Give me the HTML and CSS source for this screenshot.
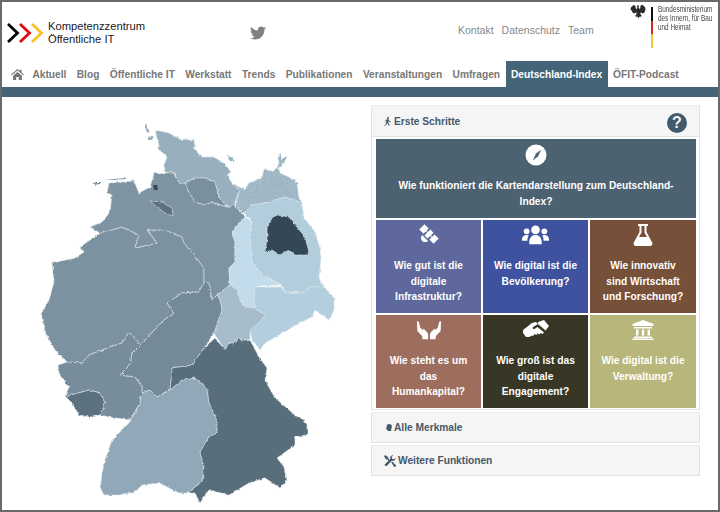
FILE: index.html
```html
<!DOCTYPE html>
<html lang="de">
<head>
<meta charset="utf-8">
<title>Deutschland-Index</title>
<link rel="stylesheet" href="styles.css">
</head>
<body>
<div class="frame">
  <header class="top">
    <div class="brand">
      <svg class="chevrons" viewBox="0 0 36 20" width="36" height="20">
        <polyline points="1,1 10.5,10 1,19" class="chev c-black"/>
        <polyline points="13,1 22.5,10 13,19" class="chev c-red"/>
        <polyline points="25,1 34.5,10 25,19" class="chev c-yellow"/>
      </svg>
      <div class="brand-text">Kompetenzzentrum<br>Öffentliche IT</div>
    </div>
    <svg class="twitter" viewBox="0 0 512 512" width="16" height="16"><path d="M459.37 151.716c.325 4.548.325 9.097.325 13.645 0 138.72-105.583 298.558-298.558 298.558-59.452 0-114.68-17.219-161.137-47.106 8.447.974 16.568 1.299 25.34 1.299 49.055 0 94.213-16.568 130.274-44.832-46.132-.975-84.792-31.188-98.112-72.772 6.498.974 12.995 1.624 19.818 1.624 9.421 0 18.843-1.3 27.614-3.573-48.081-9.747-84.143-51.98-84.143-102.985v-1.299c13.969 7.797 30.214 12.67 47.431 13.319-28.264-18.843-46.781-51.005-46.781-87.391 0-19.492 5.197-37.36 14.294-52.954 51.655 63.675 129.3 105.258 216.365 109.807-1.624-7.797-2.599-15.918-2.599-24.04 0-57.828 46.782-104.934 104.934-104.934 30.213 0 57.502 12.67 76.67 33.137 23.715-4.548 46.456-13.32 66.599-25.34-7.798 24.366-24.366 44.833-46.132 57.827 21.117-2.273 41.584-8.122 60.426-16.243-14.292 20.791-32.161 39.308-52.628 54.253z"/></svg>
    <nav class="meta">
      <a>Kontakt</a><a>Datenschutz</a><a>Team</a>
    </nav>
    <div class="ministry">
      <svg class="eagle" viewBox="0 0 16 17" width="16" height="17">
        <path d="M8 1l1 .8-.4 1.500.7 1.700.9-.8.4-2.700 1.800-.8 1.300 1.300 1.200.9.6 2-.4 2.200-.9 1.700-1.300.8-1.500-.8-.7-.5-.3 1.700 1.800 2.400-1.500-.5-.3 1.700-1.100-1-.8 1.800-.8-1.800-1.100 1-.3-1.700-1.500.5 1.800-2.400-.3-1.700-.7.500-1.500.8-1.300-.8-.9-1.700L.5 5.200l.6-2 1.200-.9L3.600 1l1.800.8.4 2.700.9.8.7-1.700L7 2z"/>
      </svg>
      <div class="flag"><span class="fl-b"></span><span class="fl-r"></span><span class="fl-y"></span></div>
      <div class="ministry-text">Bundesministerium<br>des Innern, für Bau<br>und Heimat</div>
    </div>
  </header>

  <nav class="mainnav">
    <a class="home"><svg viewBox="0 0 14 12" width="13" height="11"><path d="M7 0l2.600 2.200V.8h1.800v2.900L14 6l-.8.9L7 1.700.8 6.900 0 6zM2.200 7.300L7 3.200l4.800 4.100V12H8.400V8.600H5.600V12H2.200z"/></svg></a>
    <a>Aktuell</a><a>Blog</a><a>Öffentliche IT</a><a>Werkstatt</a><a>Trends</a><a>Publikationen</a><a>Veranstaltungen</a><a>Umfragen</a><a class="active">Deutschland-Index</a><a>ÖFIT-Podcast</a>
  </nav>
  <div class="bar"></div>

  <main class="content">
    <svg class="map" viewBox="0 97 369 411" width="369" height="411">
      <defs>
        <filter id="rough" x="-5%" y="-5%" width="110%" height="110%" color-interpolation-filters="sRGB">
          <feTurbulence type="fractalNoise" baseFrequency="0.28" numOctaves="2" seed="4"/>
          <feDisplacementMap in="SourceGraphic" scale="3" xChannelSelector="R" yChannelSelector="G"/>
        </filter>
        <pattern id="dots" width="2" height="2" patternUnits="userSpaceOnUse">
          <rect width="2" height="2" fill="#a3bac8"/><rect width="1" height="1" fill="#9ab1c0"/>
        </pattern>
      </defs>
      <g class="states" filter="url(#rough)">
        <polygon class="s-nw" points="50,263 73,258 82,252 78,247 98,233 120,227 137,235 133,248 155,243 145,230 163,230 180,237 182,243 190,252 202,268 202,282 197,292 180,293 165,303 172,313 162,320 138,345 127,332 120,343 108,347 87,355 80,363 65,362 53,350 43,332 40,313 47,300 52,282"/>
        <polygon class="s-ni" points="105,193 107,183 132,181 137,193 148,187 152,173 173,173 177,183 183,183 187,192 193,202 203,205 210,202 225,207 232,205 242,215 243,217 230,232 233,242 233,262 227,268 228,285 215,295 210,300 207,283 202,282 202,268 190,252 182,243 180,237 163,230 145,230 155,243 133,248 137,235 120,227 98,233 88,227 100,222 108,212 110,195"/>
        <polygon class="s-sh" points="153,130 167,133 177,139 192,140 193,150 200,157 212,157 223,164 229,172 225,175 230,183 237,190 232,205 225,207 217,197 213,182 203,178 193,178 183,183 177,183 173,173 163,172 162,165 165,157 158,150 155,138"/>
        <polygon class="s-hh" points="183,183 193,178 203,178 213,182 217,197 225,207 210,202 203,205 193,202 187,192"/>
        <polygon class="s-mv" points="230,183 243,190 247,183 260,178 262,168 270,172 277,167 278,173 287,177 295,183 297,198 300,203 283,197 263,203 250,205 242,213 233,207 237,190"/>
        <polygon class="s-bb" points="242,213 250,205 263,203 283,197 300,203 302,218 313,232 318,248 319,258 317,278 322,287 308,287 300,293 283,292 280,285 260,275 250,262 248,235 250,222"/>
        <polygon class="s-st" points="243,217 250,222 248,235 250,262 260,275 280,285 255,286 252,300 253,310 243,307 239,302 235,290 228,285 227,268 233,262 233,242 230,232"/>
        <polygon class="s-sn" points="253,287 280,287 283,292 300,293 308,287 322,287 332,298 332,310 327,320 313,310 310,317 290,327 277,335 263,343 258,350 250,340 248,330 257,323 263,315 253,308 252,300"/>
        <polygon class="s-th" points="228,285 215,295 218,300 220,310 212,333 215,338 223,350 227,343 232,343 237,337 240,340 248,340 248,330 257,323 263,315 253,308 243,307 239,302 235,290"/>
        <polygon class="s-he" points="202,282 207,283 210,300 215,295 218,300 220,310 212,333 202,348 190,365 170,368 168,390 155,397 148,390 140,393 140,387 133,377 118,375 128,365 130,353 138,345 162,320 172,313 165,303 180,293 197,292"/>
        <polygon class="s-rp" points="65,362 80,363 87,355 108,347 120,343 127,332 138,345 130,353 128,365 118,375 133,377 140,387 140,393 138,403 128,420 107,417 98,415 103,403 98,393 87,390 73,394 63,396 67,387 57,373 56,365"/>
        <polygon class="s-sl" points="63,396 73,394 87,390 98,393 103,403 98,415 90,417 77,415 70,403"/>
        <polygon class="s-bw" points="140,393 148,390 155,397 168,390 180,380 193,378 205,388 207,403 215,420 215,433 207,437 198,452 202,467 200,482 185,493 177,493 157,483 140,485 133,492 117,495 102,495 98,487 102,463 110,440 128,422 138,403"/>
        <polygon class="s-by" points="213,338 223,350 227,343 232,343 237,337 240,340 248,340 257,357 265,368 263,380 273,398 293,415 305,423 305,435 293,437 293,445 275,458 282,467 285,480 278,488 263,478 247,483 227,495 207,490 198,503 193,493 185,493 200,482 202,467 198,452 207,437 215,433 215,420 207,403 205,388 193,378 180,380 168,390 170,368 190,365 202,348"/>
        <polygon class="s-be" points="275,215 287,217 295,227 303,237 307,252 305,255 293,255 287,250 278,255 270,250 263,252 265,240 265,228 270,218"/>
        <polygon class="s-hb" points="148,201 160,202 170,208 171,216 163,213 155,207"/>
        <polygon class="s-be s-tiny" points="151,185 155,185 156,190 152,190"/>
        <polygon class="s-sh s-tiny" points="143,124 145,128 148,131 146,133 143,129"/>
        <polygon class="s-sh s-tiny" points="146,137 152,136 150,140 146,140"/>
        <polygon class="s-sh s-tiny" points="155,147 160,148 158,151"/>
        <polygon class="s-sh s-tiny" points="226,156 231,158 233,162 228,161"/>
        <polygon class="s-ni s-tiny" points="92,183 98,183 98,184 92,185"/>
        <polygon class="s-ni s-tiny" points="103,180 112,179 124,178 124,179 112,180"/>
        <polygon class="s-mv s-tiny" points="278,152 280,160 284,156 285,157 280,166 275,168 277,160"/>
      </g>
    </svg>

    <aside class="side">
      <section class="panel">
        <div class="panel-head">
          <svg class="ico-sm ico-walk" viewBox="0 0 12 14" width="8" height="11"><circle cx="6" cy="1.600" r="1.500"/><path d="M4.500 3.800h2.600l1 2.600 2.400 1-.5 1.100-3-1.200-.4-1-.5 2.400 2 2.200v2.600H6.800l-.3-2-2-1.800-1 2.200L1 13.900l-.6-1 1.900-1.500 1-3.600-.1-2.200-1.200.8-.6 2H1l.8-2.800z"/></svg>
          <h2>Erste Schritte</h2>
          <span class="help">?</span>
        </div>
        <div class="panel-body">
          <a class="tile tile-wide">
            <svg class="ico" viewBox="0 0 22 22" width="22" height="22"><circle cx="11" cy="11" r="10.500" fill="#fff"/><path class="dark" d="M16.200 5.800l-3.400 7-5 3.400 3.400-7z"/></svg>
            <span class="tile-text">Wie funktioniert die Kartendarstellung zum Deutschland-Index?</span>
          </a>
          <div class="tiles">
            <a class="tile t1">
              <svg class="ico" viewBox="0 0 24 24" width="22" height="22"><g transform="rotate(45 12 11)"><rect x="1" y="7" width="6.500" height="8"/><rect x="9.500" y="6.500" width="5" height="9"/><rect x="16.500" y="7" width="6.500" height="8"/><rect x="6" y="10.500" width="12" height="1"/><path d="M7.500 17h9a4.500 4.500 0 0 1-9 0z"/></g></svg>
              <span class="tile-text">Wie gut ist die digitale Infrastruktur?</span>
            </a>
            <a class="tile t2">
              <svg class="ico" viewBox="0 0 26 20" width="27" height="20"><circle cx="13" cy="5" r="4.200"/><circle cx="4.500" cy="6.500" r="2.800"/><circle cx="21.500" cy="6.500" r="2.800"/><path d="M7 17c0-4.500 2.500-7 6-7s6 2.500 6 7v2H7zM0 14c0-2.500 2-4 4.500-4 1 0 1.500.2 2 .5-1 1.500-1.300 3-1.300 5H0zM26 14c0-2.500-2-4-4.500-4-1 0-1.500.2-2 .5 1 1.500 1.300 3 1.300 5H26z"/></svg>
              <span class="tile-text">Wie digital ist die Bevölkerung?</span>
            </a>
            <a class="tile t3">
              <svg class="ico" viewBox="0 0 20 22" width="20" height="22"><path d="M5 0h10v2h-1.500v6l5.700 10.500c.8 1.600-.2 3.500-2 3.500H2.800c-1.800 0-2.800-1.900-2-3.500L6.500 8V2H5zM8.500 2v6.500L6 13h8l-2.500-4.500V2z"/></svg>
              <span class="tile-text">Wie innovativ sind Wirtschaft und Forschung?</span>
            </a>
            <a class="tile t4">
              <svg class="ico" viewBox="0 0 28 20" width="26" height="20"><path d="M1 1.500c0-1 1.500-1.300 2-.3l1.500 6 3 3 .5-1.700 3.500 3.500c1 1 1.500 2 1.500 3.500V20H7l-.5-3.500L1.500 11zM27 1.500c0-1-1.500-1.300-2-.3l-1.500 6-3 3-.5-1.700-3.500 3.500c-1 1-1.500 2-1.500 3.500V20h6l.5-3.500 5-5.500z"/></svg>
              <span class="tile-text">Wie steht es um das Humankapital?</span>
            </a>
            <a class="tile t5">
              <svg class="ico" viewBox="0 0 26 20" width="26" height="20"><path d="M0 10l9-7 4-1 2 2-5 3c-1 1 0 2.500 1.500 2l3-2 6.500 5.500-1.500 1.500-2-1-1 1.500-2-1-1 1.500-2-1-1.500 2-1.500-.5-2 1.500H3l-3-4zM15 2l6-2 5 6-3.500 4.500-7.500-6.500z"/></svg>
              <span class="tile-text">Wie groß ist das digitale Engagement?</span>
            </a>
            <a class="tile t6">
              <svg class="ico" viewBox="0 0 22 20" width="22" height="20"><path d="M11 0l10.500 4v2H.5V4zM2 7h18v1.500H2zM4 9.500h2.500v6H4zM9.800 9.500h2.500v6H9.800zM15.500 9.500H18v6h-2.500zM2 16.500h18V18H2zM.5 18.500h21V20H.5z"/></svg>
              <span class="tile-text">Wie digital ist die Verwaltung?</span>
            </a>
          </div>
        </div>
      </section>
      <section class="panel panel-closed">
        <div class="panel-head">
          <svg class="ico-sm ico-head" viewBox="0 0 10 12" width="6" height="9"><path d="M5 0c3 0 5 2 5 4.500 0 1.500-.8 2.500-1.300 3.300V12H3.500v-1.500H2c-.8 0-1.200-.5-1.200-1.200V7.500H0l1-2.200C1 2 2.500 0 5 0z"/></svg>
          <h2>Alle Merkmale</h2>
        </div>
      </section>
      <section class="panel panel-closed">
        <div class="panel-head">
          <svg class="ico-sm" viewBox="0 0 14 14" width="12" height="12"><path d="M1.500 0L5 2.700v1.500l2 2-1 1-2-2H2.500L0 1.500zM13.800 3.200a3.500 3.500 0 0 1-4.600 3.400L3 12.800a1.500 1.500 0 0 1-2-2l6.300-6.200A3.500 3.500 0 0 1 11 .2L9 2.200l.5 2.200 2.200.5zM8.500 8.500l1-1 4 4a1.400 1.400 0 0 1-2 2z"/></svg>
          <h2>Weitere Funktionen</h2>
        </div>
      </section>
    </aside>
  </main>
</div>
</body>
</html>
```

FILE: styles.css
```css
* { box-sizing: border-box; }
html, body { margin: 0; padding: 0; background: #fff; }
body { font-family: "Liberation Sans", Arial, sans-serif; }

.frame {
  width: 720px;
  height: 512px;
  border: 2px solid #6a6a6a;
  display: flex;
  flex-direction: column;
  overflow: hidden;
  background: #fff;
}

.top {
  height: 59px;
  display: flex;
  flex: none;
}
.brand {
  display: flex;
  align-items: flex-start;
  margin: 20px 0 0 5px;
  width: 243px;
  flex: none;
}
.chevrons { flex: none; margin-top: 1px; }
.chev { fill: none; stroke-width: 2.800; }
.c-black { stroke: #000; }
.c-red { stroke: #e30613; }
.c-yellow { stroke: #fbc02d; }
.brand-text {
  margin: -2px 0 0 5px;
  font-size: 11.200px;
  line-height: 12.500px;
  color: #1a1a1a;
}
.twitter { fill: #808080; margin-top: 23px; flex: none; }
.meta {
  display: flex;
  gap: 8px;
  margin: 21px 0 0 192px;
  font-size: 10.500px;
  line-height: 14px;
  color: #888;
  height: 14px;
  flex: none;
}
.ministry {
  display: flex;
  margin: 2px 0 0 36px;
  flex: none;
}
.eagle { fill: #2b2b2b; flex: none; }
.flag {
  width: 2px;
  height: 41px;
  margin: 3px 0 0 5px;
  display: flex;
  flex-direction: column;
  flex: none;
}
.flag span { flex: 1; }
.fl-b { background: #111; }
.fl-r { background: #d8232a; }
.fl-y { background: #f6c33b; }
.ministry-text {
  margin: 1px 0 0 5px;
  width: 58px;
  flex: none;
  font-size: 8.200px;
  line-height: 9px;
  color: #444;
  white-space: nowrap;
  transform: scaleX(.78);
  transform-origin: left top;
}

.mainnav {
  height: 26px;
  flex: none;
  display: flex;
  padding-left: 4px;
  gap: .4px;
  font-size: 10.200px;
  font-weight: 700;
  color: #777;
}
.mainnav a {
  padding: 0 5px;
  line-height: 27px;
  white-space: nowrap;
}
.mainnav .home { padding: 0 3px 0 5px; display: flex; align-items: center; }
.home svg { fill: #777; display: block; }
.mainnav .active { background: #436577; color: #fff; padding: 0 5.500px; }
.bar { height: 10px; flex: none; background: #436577; }

.content {
  flex: 1;
  display: flex;
  min-height: 0;
}
.map { flex: none; display: block; }
.states polygon { stroke: #dbe5eb; stroke-width: .6; stroke-linejoin: round; }
.states .s-tiny { stroke: none; }
.s-nw { fill: #7c92a0; }
.s-ni { fill: #7e94a2; }
.s-sh { fill: #98afbd; }
.s-hh { fill: #7a909e; }
.s-mv { fill: url(#dots); }
.s-bb { fill: #b2cedd; }
.s-st { fill: #c3dcec; }
.s-sn { fill: #b3cede; }
.s-th { fill: #a6bccb; }
.s-he { fill: #748a98; }
.s-rp { fill: #788d9b; }
.s-sl { fill: #5c7180; }
.s-bw { fill: #90a8b8; }
.s-by { fill: #596e7b; }
.s-be { fill: #334854; }
.s-hb { fill: #5c7180; }

.side {
  width: 329px;
  margin-top: 8px;
  display: flex;
  flex-direction: column;
  flex: none;
  gap: 2px;
}
.panel { border: 1px solid #e3e3e3; border-top-color: #ececec; background: #fff; }
.panel-head {
  height: 30px;
  background: #f5f5f5;
  display: flex;
  align-items: center;
  padding: 0 12px;
  color: #44596a;
}
.panel-closed .panel-head { height: 29px; }
.panel-head h2 {
  margin: 0 0 0 2px;
  font-size: 10.200px;
  font-weight: 700;
  color: #44596a;
}
.ico-sm { fill: #44596a; flex: none; }
.ico-head { margin-left: 2px; }
.help {
  margin: 4px 0 0 auto;
  width: 20px;
  height: 20px;
  border-radius: 50%;
  background: #3f5a6a;
  color: #f5f5f5;
  font-size: 16px;
  font-weight: 700;
  line-height: 20px;
  text-align: center;
}
.panel-body { padding: 2px 3px 1px 4px; border-top: 1px solid #e3e3e3; }

.tile {
  display: flex;
  flex-direction: column;
  align-items: center;
  color: #fff;
  font-size: 10.200px;
  font-weight: 700;
  line-height: 15.500px;
  text-align: center;
  padding: 4px 10px 0;
}
.tile-wide { background: #4d6270; height: 79px; padding: 5px 14px 0; }
.tile-wide .tile-text { margin-top: 12px; }
.tiles {
  display: grid;
  grid-template-columns: 105px 105px 106px;
  grid-auto-rows: 93px;
  gap: 2px;
  margin-top: 2px;
}
.ico { fill: #fff; flex: none; display: block; }
.tile .tile-text { display: block; }
.tiles .ico { height: 22px; }
.tiles .tile-text { margin-top: 12px; }
.tile .dark { fill: #4d6270; }
.t1 { background: #5f689d; }
.t2 { background: #3f52a0; }
.t3 { background: #765038; }
.t4 { background: #9d6e5e; }
.t5 { background: #383725; }
.t6 { background: #b8b67a; }
```
